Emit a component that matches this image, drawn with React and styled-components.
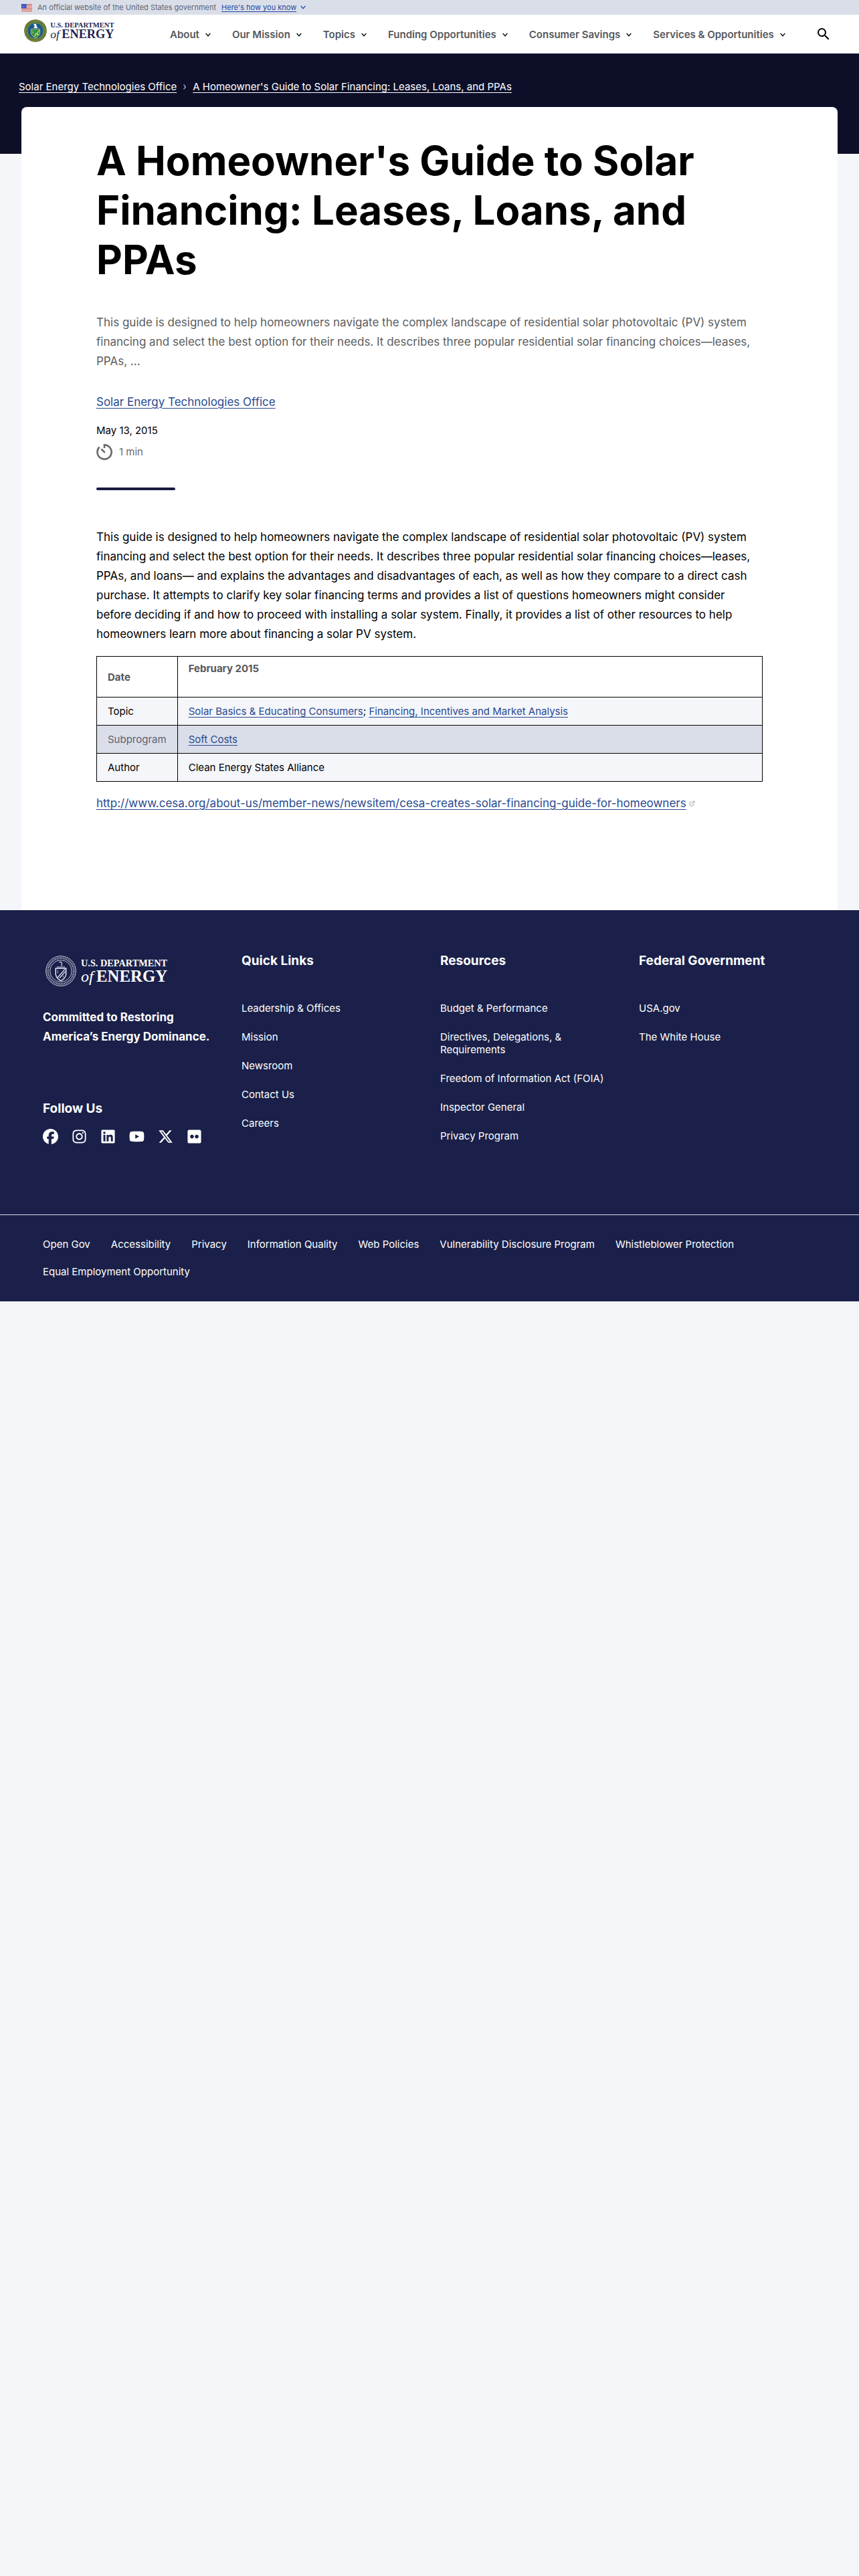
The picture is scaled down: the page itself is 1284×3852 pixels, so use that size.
import React from "react";
import styled, { createGlobalStyle } from "styled-components";
import { FaFacebook, FaFlickr, FaInstagram, FaLinkedin, FaXTwitter, FaYoutube } from "react-icons/fa6";
import { MdSearch } from "react-icons/md";
import { FiExternalLink } from "react-icons/fi";

const GlobalStyle = createGlobalStyle`
  * {
    box-sizing: border-box;
  }
  body {
    margin: 0;
    background-color: #f4f6fa;
    color: #000;
    font-family: Inter, "Liberation Sans", sans-serif;
    font-size: 15px;
    line-height: 24px;
  }
  h1, h2, p, ul, ol {
    margin: 0;
    padding: 0;
  }
  ul, ol {
    list-style: none;
  }
  button {
    border: 0;
    padding: 0;
    background: none;
    font-family: inherit;
    cursor: pointer;
  }
  svg {
    flex-shrink: 0;
  }
`;

/* top banner */
const Banner = styled.section`
  display: flex;
  align-items: center;
  gap: 8px;
  padding: 0 32px;
  background-color: #dadee9;
  color: #5c6370;
  font-size: 11px;
  line-height: 22px;

  button {
    display: flex;
    align-items: center;
    gap: 6px;
    color: #2449a0;
    font-size: 11px;
    line-height: 22px;
  }
  span {
    text-decoration: underline;
    text-underline-offset: 2px;
  }
`;

/* header */
const Header = styled.header`
  display: flex;
  align-items: flex-start;
  padding: 7px 41px 0 36px;
  min-height: 58px;
  background-color: #fff;

  nav {
    margin-left: 82px;
  }
`;
const NavList = styled.ul`
  display: flex;
  gap: 32px;
  padding-top: 11px;
`;
const NavButton = styled.button`
  display: flex;
  align-items: center;
  gap: 9px;
  color: #55585c;
  font-size: 15px;
  font-weight: 600;
  line-height: 24px;
  white-space: nowrap;

  svg {
    color: #000;
  }
`;
const SearchButton = styled.button`
  display: flex;
  margin-left: auto;
  padding-top: 10px;
  color: #000;
  font-size: 24px;
`;

/* dark strip behind the card */
const Hero = styled.section`
  min-height: 150px;
  padding: 38px 28px 0;
  background-color: #0d0f29;
  color: #fff;

  ol {
    display: flex;
    align-items: center;
    gap: 10px;
  }
  li {
    display: flex;
    align-items: center;
    gap: 10px;
  }
  a {
    color: inherit;
    text-underline-offset: 3px;
  }
`;

const Card = styled.main`
  margin: -70px 32px 0;
  padding: 43px 112px 145px;
  border-radius: 8px 8px 0 0;
  background-color: #fff;
  font-size: 17px;
  line-height: 29px;
`;
const Title = styled.h1`
  font-size: 60px;
  font-weight: 700;
  line-height: 74px;
`;
const Intro = styled.p`
  margin-top: 43px;
  color: #5b5d60;
`;
const TextLink = styled.a`
  color: #284a8f;
  text-decoration: underline;
  text-underline-offset: 3px;
`;
const Meta = styled.div`
  display: flex;
  flex-direction: column;
  align-items: flex-start;
  margin-top: 32px;
  font-size: 15px;
  line-height: 24px;

  time {
    margin-top: 16px;
  }
`;
const Office = styled(TextLink)`
  font-size: 17px;
  line-height: 29px;
`;
const ReadTime = styled.p`
  display: flex;
  align-items: center;
  gap: 10px;
  margin-top: 8px;
  color: #6b6b6b;
`;
const Bar = styled.div`
  width: 118px;
  height: 4px;
  margin: 41px 0 56px;
  border-radius: 2px;
  background-color: #1a1942;
`;

const InfoTable = styled.table`
  width: 100%;
  margin: 18px 0;
  border-collapse: collapse;
  font-size: 15px;
  line-height: 25px;

  th,
  td {
    padding: 8px 16px;
    border: 1px solid #000;
    text-align: left;
    font-weight: 400;
  }
  th:first-child {
    width: 120px;
  }
  thead th {
    color: #55585c;
    font-weight: 700;
  }
  thead p {
    margin-bottom: 24px;
    line-height: 20px;
  }
`;
const Row = styled.tr`
  background-color: ${(props) => (props.$dark ? "#dadee9" : "#f4f6fa")};

  th {
    color: ${(props) => (props.$dark ? "#5c6370" : "#000")};
  }
`;
const OutLink = styled.p`
  display: flex;
  align-items: center;
  gap: 4px;

  svg {
    color: #8a8a8a;
    font-size: 9px;
  }
`;

/* footer */
const Footer = styled.footer`
  background-color: #1a2049;
  color: #fff;

  a {
    color: inherit;
    text-decoration: none;
  }
`;
const FooterTop = styled.div`
  display: grid;
  grid-template-columns: repeat(4, 1fr);
  gap: 32px;
  padding: 64px 64px 105px;
  border-bottom: 1px solid #dadee9;
`;
const FooterTitle = styled.h2`
  font-size: 19px;
  font-weight: 700;
  line-height: 24px;
`;
const FooterLogo = styled.div`
  display: flex;
  padding: 4px;
`;
const Motto = styled.p`
  margin: 28px 0 81px;
  font-size: 17px;
  font-weight: 700;
  line-height: 29px;
`;
const Social = styled.ul`
  display: flex;
  gap: 20px;
  margin-top: 18px;

  a {
    display: flex;
  }
  svg {
    width: auto;
    height: 23px;
  }
`;
const FooterLinks = styled.ul`
  display: flex;
  flex-direction: column;
  gap: 24px;
  margin-top: 49px;
  line-height: 19px;
`;
const FooterBottom = styled.ul`
  display: flex;
  flex-wrap: wrap;
  gap: 22px 31px;
  padding: 34px 64px 35px;
  line-height: 19px;
`;

const Chevron = () => (
  <svg width="8" height="6" viewBox="0 0 8 6" fill="none" stroke="currentColor" strokeWidth="1.4" aria-hidden="true">
    <path d="M0.6 0.9 L4 4.6 L7.4 0.9" />
  </svg>
);

const Separator = () => (
  <svg width="4" height="8" viewBox="0 0 4 8" fill="none" stroke="#b9bcc8" strokeWidth="1.2" aria-hidden="true">
    <path d="M0.5 0.6 L3.4 4 L0.5 7.4" />
  </svg>
);

const Flag = () => (
  <svg width="16" height="11" viewBox="0 0 16 11" aria-hidden="true">
    <rect width="16" height="11" fill="#fff" />
    <path d="M0 .5h16M0 2.5h16M0 4.5h16M0 6.5h16M0 8.5h16M0 10.5h16" stroke="#c8432f" />
    <rect width="8" height="6.5" fill="#1e33b1" />
    <path d="M1 1.5h7M1 3.5h7M1 5.2h7" stroke="#fff" strokeWidth=".8" strokeDasharray="1 1" />
  </svg>
);

const Timer = () => (
  <svg width="24" height="24" viewBox="0 0 24 24" fill="none" stroke="#6b6b6b" strokeWidth="2.6" aria-hidden="true">
    <path d="M12 6 V1.4 A10.6 10.6 0 1 1 4.6 4.5" />
    <path d="M7.4 7.4 L12.8 12.8" />
  </svg>
);

const ColorSeal = () => (
  <g>
    <circle cx="23" cy="23" r="22.8" fill="#315f2a" />
    <circle cx="23" cy="23" r="21.8" fill="none" stroke="#c0a93d" strokeWidth="1" />
    <circle cx="23" cy="23" r="19" fill="none" stroke="#a8a445" strokeWidth="2.6" strokeDasharray="1.6 1.3" />
    <circle cx="23" cy="23" r="16.4" fill="#155a8c" stroke="#c8b344" strokeWidth="1" />
    <path d="M14 20 H32 V27 Q31 34 23 37.5 Q15 34 14 27 Z" fill="#2f8f46" stroke="#d8cf72" strokeWidth="1.2" />
    <path d="M20 35 L31 22 M23 33 L23 28 M18 24 v4" stroke="#d9dc76" strokeWidth="1.6" />
    <circle cx="27.5" cy="30.5" r="1.7" fill="#ead75a" />
    <path d="M15 18.5 H31" stroke="#56748f" strokeWidth="2" />
    <path d="M19.5 17.5 Q22 15 21 12 L18.5 11 Q20.5 8.5 23.5 9 Q25.5 10 25 13 L27.5 17.5 Z" fill="#fff" />
  </g>
);

const WhiteSeal = () => (
  <g fill="none" stroke="#e6ebf7">
    <circle cx="23" cy="23" r="22.3" strokeWidth=".9" />
    <circle cx="23" cy="23" r="19.3" strokeWidth="3" strokeDasharray="1.3 1.1" opacity=".7" />
    <circle cx="23" cy="23" r="16.2" strokeWidth=".8" />
    <path d="M15.3 19 H30.7 V28 Q30 34 23 37.6 Q16 34 15.3 28 Z" strokeWidth="1.5" />
    <path d="M17.8 33 L29 20.5 M21 33.5 L29.5 24" strokeWidth="1.2" />
    <path d="M18.5 22 v5 M26.5 30 v3" strokeWidth="1" strokeDasharray="1.5 1" />
    <path d="M17 17 H29" strokeWidth="2" strokeDasharray="1.4 .8" opacity=".7" />
    <path d="M20.5 10 Q23 8.5 24.3 11 V15.5" strokeWidth="1.2" />
  </g>
);

const EnergyLogo = ({ width, height, light }) => (
  <svg
    width={width}
    height={height}
    viewBox="0 0 184 46"
    fill={light ? "#fff" : "#1f1f50"}
    fontFamily='"Liberation Serif", serif'
    role="img"
    aria-label="U.S. Department of Energy"
  >
    {light ? <WhiteSeal /> : <ColorSeal />}
    <text x="53" y="16" fontSize="14.3" fontWeight="700">
      U.S. DEPARTMENT
    </text>
    <text x="53" y="38.5" fontSize="24" fontStyle="italic">
      of
    </text>
    <text x="76" y="38.5" fontSize="24.8" fontWeight="700">
      ENERGY
    </text>
  </svg>
);

const navItems = ["About", "Our Mission", "Topics", "Funding Opportunities", "Consumer Savings", "Services & Opportunities"];

const footerColumns = [
  { title: "Quick Links", links: ["Leadership & Offices", "Mission", "Newsroom", "Contact Us", "Careers"] },
  {
    title: "Resources",
    links: [
      "Budget & Performance",
      "Directives, Delegations, & Requirements",
      "Freedom of Information Act (FOIA)",
      "Inspector General",
      "Privacy Program",
    ],
  },
  { title: "Federal Government", links: ["USA.gov", "The White House"] },
];

const social = [
  { name: "Facebook", Icon: FaFacebook },
  { name: "Instagram", Icon: FaInstagram },
  { name: "LinkedIn", Icon: FaLinkedin },
  { name: "YouTube", Icon: FaYoutube },
  { name: "X", Icon: FaXTwitter },
  { name: "Flickr", Icon: FaFlickr },
];

const policyLinks = [
  "Open Gov",
  "Accessibility",
  "Privacy",
  "Information Quality",
  "Web Policies",
  "Vulnerability Disclosure Program",
  "Whistleblower Protection",
  "Equal Employment Opportunity",
];

const App = () => {
  return (
    <>
      <GlobalStyle />
      <Banner>
        <Flag />
        An official website of the United States government
        <button type="button">
          <span>Here's how you know</span>
          <Chevron />
        </button>
      </Banner>

      <Header>
        <a href="#home">
          <EnergyLogo width={136} height={34} />
        </a>
        <nav>
          <NavList>
            {navItems.map((item) => (
              <li key={item}>
                <NavButton type="button">
                  {item}
                  <Chevron />
                </NavButton>
              </li>
            ))}
          </NavList>
        </nav>
        <SearchButton type="button" aria-label="Search">
          <MdSearch />
        </SearchButton>
      </Header>

      <Hero>
        <ol>
          <li>
            <a href="#office">Solar Energy Technologies Office</a>
            <Separator />
          </li>
          <li>
            <a href="#guide">A Homeowner's Guide to Solar Financing: Leases, Loans, and PPAs</a>
          </li>
        </ol>
      </Hero>

      <Card>
        <Title>A Homeowner's Guide to Solar Financing: Leases, Loans, and PPAs</Title>
        <Intro>
          This guide is designed to help homeowners navigate the complex landscape of residential solar photovoltaic (PV)
          system financing and select the best option for their needs. It describes three popular residential solar
          financing choices—leases, PPAs, ...
        </Intro>
        <Meta>
          <Office href="#office">Solar Energy Technologies Office</Office>
          <time dateTime="2015-05-13">May 13, 2015</time>
          <ReadTime>
            <Timer />1 min
          </ReadTime>
        </Meta>
        <Bar />
        <p>
          This guide is designed to help homeowners navigate the complex landscape of residential solar photovoltaic (PV)
          system financing and select the best option for their needs. It describes three popular residential solar
          financing choices—leases, PPAs, and loans— and explains the advantages and disadvantages of each, as well as how
          they compare to a direct cash purchase. It attempts to clarify key solar financing terms and provides a list of
          questions homeowners might consider before deciding if and how to proceed with installing a solar system.
          Finally, it provides a list of other resources to help homeowners learn more about financing a solar PV system.
        </p>

        <InfoTable>
          <thead>
            <tr>
              <th>Date</th>
              <th>
                <p>February 2015</p>
              </th>
            </tr>
          </thead>
          <tbody>
            <Row>
              <th scope="row">Topic</th>
              <td>
                <TextLink href="#basics">Solar Basics &amp; Educating Consumers</TextLink>;{" "}
                <TextLink href="#financing">Financing, Incentives and Market Analysis</TextLink>
              </td>
            </Row>
            <Row $dark>
              <th scope="row">Subprogram</th>
              <td>
                <TextLink href="#soft-costs">Soft Costs</TextLink>
              </td>
            </Row>
            <Row>
              <th scope="row">Author</th>
              <td>Clean Energy States Alliance</td>
            </Row>
          </tbody>
        </InfoTable>

        <OutLink>
          <TextLink href="#cesa">
            http://www.cesa.org/about-us/member-news/newsitem/cesa-creates-solar-financing-guide-for-homeowners
          </TextLink>
          <FiExternalLink />
        </OutLink>
      </Card>

      <Footer>
        <FooterTop>
          <div>
            <FooterLogo>
              <EnergyLogo width={184} height={46} light />
            </FooterLogo>
            <Motto>Committed to Restoring America’s Energy Dominance.</Motto>
            <FooterTitle>Follow Us</FooterTitle>
            <Social>
              {social.map(({ name, Icon }) => (
                <li key={name}>
                  <a href={`#${name}`} aria-label={name}>
                    <Icon />
                  </a>
                </li>
              ))}
            </Social>
          </div>
          {footerColumns.map((col) => (
            <div key={col.title}>
              <FooterTitle>{col.title}</FooterTitle>
              <FooterLinks>
                {col.links.map((link) => (
                  <li key={link}>
                    <a href="#link">{link}</a>
                  </li>
                ))}
              </FooterLinks>
            </div>
          ))}
        </FooterTop>
        <FooterBottom>
          {policyLinks.map((link) => (
            <li key={link}>
              <a href="#policy">{link}</a>
            </li>
          ))}
        </FooterBottom>
      </Footer>
    </>
  );
};

export default App;
